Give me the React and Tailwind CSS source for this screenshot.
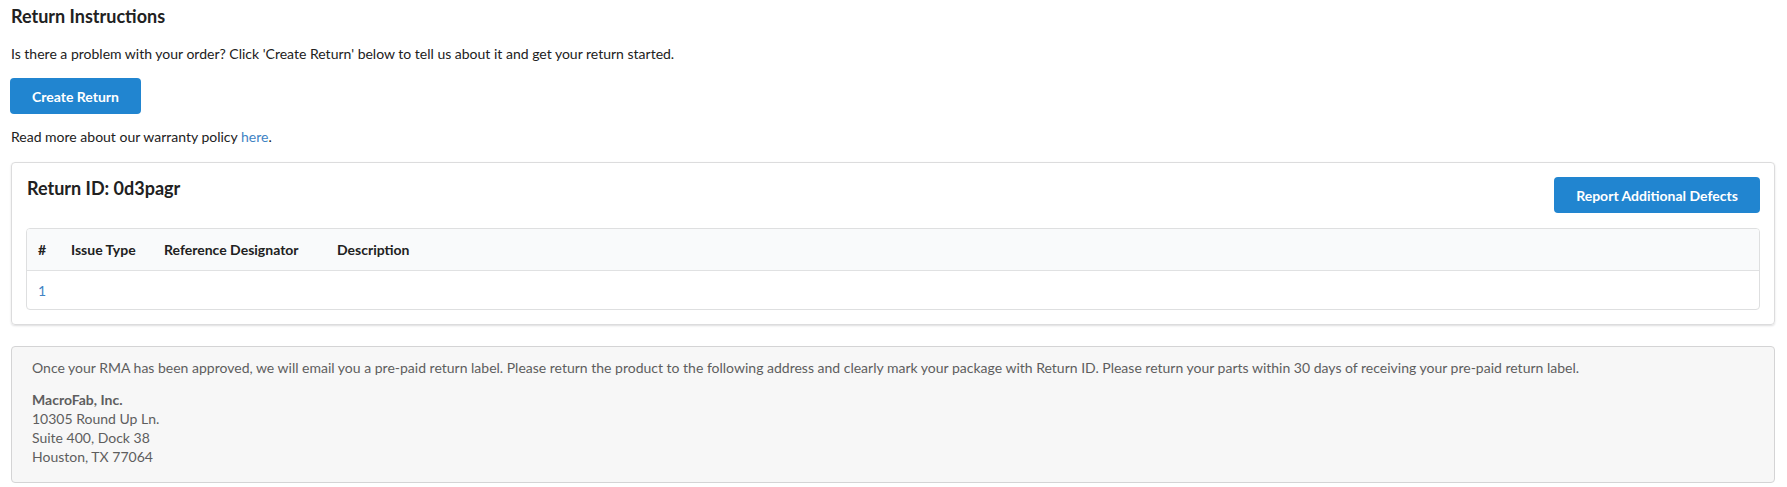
import React from "react";

const cols = [
  { label: "#", w: "w-[33px]" },
  { label: "Issue Type", w: "w-[93px]" },
  { label: "Reference Designator", w: "w-[173px]" },
  { label: "Description", w: "flex-1" },
];

const App = () => {
  return (
    <div className="min-h-[487px] bg-white pl-[10px] pr-[12px] pt-[5px] font-['Lato','Liberation_Sans',sans-serif] text-[14px] text-[#212121]">
      {/* Instructions */}
      <h3 className="text-[18px] font-bold leading-[23px] pl-px">Return Instructions</h3>
      <p className="mt-[16px] leading-[20px] pl-px">
        Is there a problem with your order? Click 'Create Return' below to tell us about it and get your return started.
      </p>
      <button className="mt-[14px] h-[36px] w-[131px] rounded-[4px] bg-[#2185d0] text-[14px] font-bold text-white">
        Create Return
      </button>
      <p className="mt-[13px] leading-[20px] pl-px">
        Read more about our warranty policy <a className="text-[#4183c4]">here</a>.
      </p>

      {/* Return card */}
      <div className="mt-[15px] ml-px rounded-[4px] border border-[#dcdcdd] p-[14px] shadow-[0_1px_2px_0_rgba(34,36,38,0.15)]">
        <div className="flex items-start justify-between">
          <h3 className="text-[18px] font-bold leading-[23px] pl-px">Return ID: 0d3pagr</h3>
          <button className="h-[36px] w-[206px] rounded-[4px] bg-[#2185d0] text-[14px] font-bold text-white">
            Report Additional Defects
          </button>
        </div>
        <div className="mt-[15px] overflow-hidden rounded-[4px] border border-[#dedfe0]">
          <div className="flex h-[42px] items-center border-b border-[#e0e1e2] bg-[#f9fafb] font-bold">
            {cols.map((c) => (
              <div key={c.label} className={`${c.w} pl-[11px]`}>
                {c.label}
              </div>
            ))}
          </div>
          <div className="flex h-[38px] items-center">
            <div className="w-[33px] pl-[11px] text-[#4183c4]">1</div>
          </div>
        </div>
      </div>

      {/* Shipping info */}
      <div className="mt-[21px] ml-px rounded-[4px] border border-[#d4d4d5] bg-[#f7f7f7] pl-[20px] pt-[11px] pb-[16px] text-[14px] leading-[19px] text-[#5e5e5e]">
        <p>
          Once your RMA has been approved, we will email you a pre-paid return label. Please return the product to the following address and clearly mark your package with Return ID. Please return your parts within 30 days of receiving your pre-paid return label.
        </p>
        <p className="mt-[13px]">
          <span className="font-bold">MacroFab, Inc.</span>
          <br />
          10305 Round Up Ln.
          <br />
          Suite 400, Dock 38
          <br />
          Houston, TX 77064
        </p>
      </div>
    </div>
  );
};

export default App;
